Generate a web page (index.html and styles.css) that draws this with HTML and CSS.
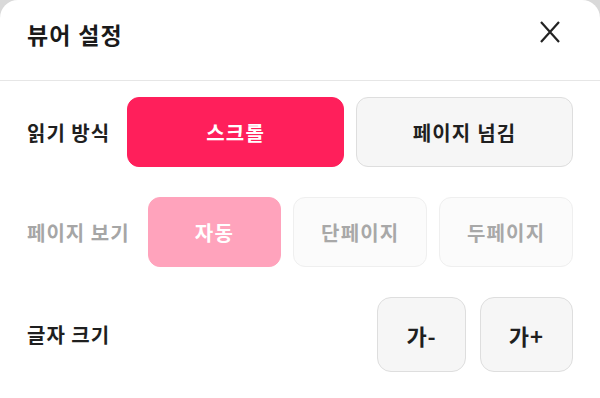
FILE: index.html
```html
<html>
  <head>
    <title>뷰어 설정</title>
    <link rel="stylesheet" href="styles.css">
  </head>
  <body>
    <div class="sheet">
      <div class="sheet-header">
        <h1>뷰어 설정</h1>
        <button class="close-btn" aria-label="닫기">
          <svg width="24" height="24" viewBox="0 0 24 24">
            <path d="M3 2 L21 22 M21 2 L3 22" stroke="#222" stroke-width="2.2" fill="none"/>
          </svg>
        </button>
      </div>

      <div class="settings">
        <div class="setting-row">
          <span class="label">읽기 방식</span>
          <div class="options">
            <button class="opt active">스크롤</button>
            <button class="opt">페이지 넘김</button>
          </div>
        </div>

        <div class="setting-row disabled">
          <span class="label">페이지 보기</span>
          <div class="options">
            <button class="opt active">자동</button>
            <button class="opt">단페이지</button>
            <button class="opt">두페이지</button>
          </div>
        </div>

        <div class="setting-row">
          <span class="label">글자 크기</span>
          <div class="size-btns">
            <button class="size-btn">가-</button>
            <button class="size-btn">가+</button>
          </div>
        </div>
      </div>
    </div>
  </body>
</html>
```

FILE: styles.css
```css
* {
  margin: 0;
  padding: 0;
  box-sizing: border-box;
  font-family: "Noto Sans CJK KR", "Noto Sans", sans-serif;
}

body {
  background: #d9d9d9;
  width: 600px;
  height: 398px;
  overflow: hidden;
}

.sheet {
  background: #ffffff;
  height: 100%;
  border-radius: 18px 18px 0 0;
}

.sheet-header {
  height: 81px;
  display: flex;
  justify-content: space-between;
  align-items: flex-start;
  padding: 13px 38px 0 27px;
  border-bottom: 1px solid #e6e6e6;
}

h1 {
  font-size: 23px;
  font-weight: 700;
  line-height: 42px;
  color: #1a1a1a;
  letter-spacing: 1.2px;
}

.close-btn {
  border: none;
  background: none;
  margin-top: 7px;
  width: 24px;
  height: 24px;
}

.settings {
  display: flex;
  flex-direction: column;
  gap: 30px;
  padding: 16px 27px 0 27px;
}

.setting-row {
  display: flex;
  align-items: center;
}

.label {
  font-size: 20px;
  font-weight: 700;
  color: #1f1f1f;
  margin-right: 17px;
  white-space: nowrap;
  letter-spacing: 1px;
}

.options {
  flex: 1;
  display: flex;
  gap: 12px;
}

.opt {
  flex: 1;
  height: 70px;
  border-radius: 12px;
  border: 1.5px solid #dedede;
  background: #f6f6f6;
  color: #1f1f1f;
  font-size: 20px;
  font-weight: 700;
  letter-spacing: 1.2px;
}

.opt.active {
  background: #ff1f5b;
  border-color: #ff1f5b;
  color: #ffffff;
}

/* disabled row: greyed out */
.disabled .label {
  color: #a6a6a6;
  margin-right: 18px;
}

.disabled .opt {
  background: #fbfbfb;
  border-color: #efefef;
  color: #a8a8a8;
}

.disabled .opt.active {
  background: #ffa3bc;
  border-color: #ffa3bc;
  color: #ffffff;
}

.size-btns {
  margin-left: auto;
  display: flex;
  gap: 14px;
}

.size-btn {
  height: 75px;
  padding: 0 28px;
  border-radius: 14px;
  border: 1.5px solid #dedede;
  background: #f6f6f6;
  color: #1f1f1f;
  font-size: 22px;
  font-weight: 700;
  letter-spacing: 1px;
}
```
